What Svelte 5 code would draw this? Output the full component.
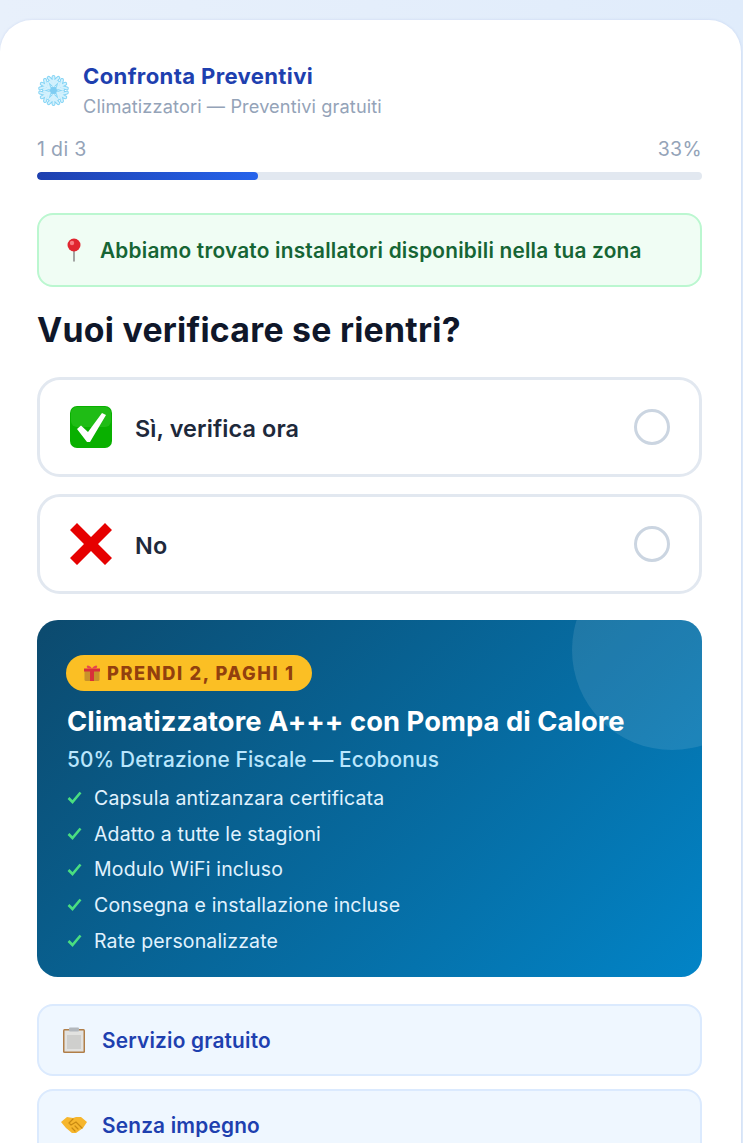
<script lang="ts">
    const perks: string[] = [
        'Capsula antizanzara certificata',
        'Adatto a tutte le stagioni',
        'Modulo WiFi incluso',
        'Consegna e installazione incluse',
        'Rate personalizzate'
    ];
    const arm = 'M0-14V14M-5-13 0-8 5-13M-4-9 0-5 4-9M-5 13 0 8 5 13M-4 9 0 5 4 9';
</script>

<div class="page">
    <main class="card">
        <header class="brand">
            <svg class="snow" viewBox="-17 -17 34 34" width="33" height="33">
                {#each [0, 60, 120] as r}
                    <path d={arm} transform="rotate({r})" fill="none" stroke="#84d4f5" stroke-width="4" stroke-linecap="round" stroke-linejoin="round"/>
                {/each}
                {#each [0, 60, 120] as r}
                    <path d={arm} transform="rotate({r})" fill="none" stroke="#d3f1fd" stroke-width="2" stroke-linecap="round" stroke-linejoin="round"/>
                {/each}
                <circle r="3.6" fill="#7fcdf2"/>
            </svg>
            <div>
                <div class="title">Confronta Preventivi</div>
                <div class="sub">Climatizzatori — Preventivi gratuiti</div>
            </div>
        </header>

        <div class="progress-labels"><span>1 di 3</span><span>33%</span></div>
        <div class="track"><div class="fill" style="width: 33.3%"></div></div>

        <div class="alert">
            <svg viewBox="0 0 16 24" width="16" height="24">
                <path d="M8 10V23" stroke="#8f8f8f" stroke-width="1.600" stroke-linecap="round"/>
                <circle cx="8" cy="7" r="6.500" fill="#e0262f"/>
                <circle cx="6" cy="5" r="2.200" fill="#f77b80"/>
            </svg>
            <span>Abbiamo trovato installatori disponibili nella tua zona</span>
        </div>

        <h1>Vuoi verificare se rientri?</h1>

        <div class="option">
            <svg viewBox="0 0 42 42" width="42" height="42">
                <rect width="42" height="42" rx="7" fill="#09b000"/>
                <rect x="1" y="1" width="40" height="20" rx="6" fill="#3ccb2e" opacity=".45"/>
                <path d="M7 23 11 19.500 18 26 32 7 36 9 20 36 17 36Z" fill="#fff"/>
            </svg>
            <span class="option-label">Sì, verifica ora</span>
            <span class="radio"></span>
        </div>
        <div class="option">
            <svg viewBox="0 0 42 42" width="42" height="42">
                <path d="M0 7 7 0 21 14 35 0 42 7 28 21 42 35 35 42 21 28 7 42 0 35 14 21Z" fill="#e60000"/>
            </svg>
            <span class="option-label">No</span>
            <span class="radio"></span>
        </div>

        <section class="promo">
            <div class="circle"></div>
            <div class="badge">
                <svg viewBox="0 0 18 18" width="18" height="18">
                    <rect x="1.500" y="5" width="15" height="12" rx="1.500" fill="#c8922a"/>
                    <rect x="7" y="5" width="4" height="12" fill="#d8303a"/>
                    <rect x="1" y="4.500" width="16" height="3" fill="#d8303a"/>
                    <path d="M9 4.500C6 .5 3 1 4 3.500 4.500 4.500 7 4.500 9 4.500 11 4.500 13.500 4.500 14 3.500 15 1 12 .5 9 4.500Z" fill="#e84550"/>
                </svg>
                PRENDI 2, PAGHI 1
            </div>
            <h2>Climatizzatore A+++ con Pompa di Calore</h2>
            <div class="promo-sub">50% Detrazione Fiscale — Ecobonus</div>
            <ul>
                {#each perks as perk}
                    <li>
                        <svg class="tick" viewBox="0 0 15 13" width="15" height="13">
                            <path d="M1.500 7 5.500 11 13.500 1.500" fill="none" stroke="#4ade80" stroke-width="2.600"/>
                        </svg>
                        {perk}
                    </li>
                {/each}
            </ul>
        </section>

        <div class="info">
            <span class="info-icon">
                <svg viewBox="0 0 22 26" width="22" height="26">
                    <rect x="0" y="2" width="22" height="24" rx="1.500" fill="#b07e48"/>
                    <rect x="1.500" y="3.500" width="19" height="21" fill="#e2e2e0"/>
                    <rect x="4" y="8" width="14" height="14" fill="#cfcfcd"/>
                    <rect x="6" y="0.500" width="10" height="4" rx="1" fill="#b3b8bd"/>
                </svg>
            </span>
            <span>Servizio gratuito</span>
        </div>
        <div class="info">
            <span class="info-icon">
                <svg viewBox="0 0 26 18" width="26" height="18">
                    <path d="M0 6 6 1 12 2 15 1 20 1 26 6 22 12 15 17 11 17 5 12Z" fill="#f6b62d"/>
                    <path d="M12 3 8 7 10 9 15 6 21 12M11 12 14 15M14 10 17 13" fill="none" stroke="#c98a12" stroke-width="1.200" stroke-linecap="round"/>
                </svg>
            </span>
            <span>Senza impegno</span>
        </div>
    </main>
</div>

<style>
    :global(body) {
        margin: 0;
        background: #fff;
    }

    .page {
        height: 1143px;
        overflow: hidden;
        padding-top: 20px;
        box-sizing: border-box;
        background: linear-gradient(90deg, #e8f0fb, #e0ecfb);
        font-family: Inter, "Liberation Sans", sans-serif;
    }

    .card {
        width: 741px;
        box-sizing: border-box;
        min-height: 1200px;
        padding: 40px 39px 0 37px;
        background: #fff;
        border-radius: 32px 32px 0 0;
        box-shadow: 0 0 3px rgba(30, 64, 175, 0.12);
    }

    .brand {
        display: flex;
        align-items: center;
        gap: 13px;
    }

    .title {
        font-size: 22.1px;
        font-weight: 700;
        line-height: 33px;
        letter-spacing: 0.35px;
        color: #1e40af;
    }

    .sub {
        font-size: 18.2px;
        line-height: 27px;
        letter-spacing: 0.11px;
        color: #94a3b8;
    }

    .progress-labels {
        display: flex;
        justify-content: space-between;
        margin-top: 16px;
        font-size: 19.5px;
        line-height: 26px;
        letter-spacing: 0.35px;
        color: #94a3b8;
    }

    .track {
        height: 8px;
        margin-top: 10px;
        background: #e2e8f0;
        border-radius: 5px;
        overflow: hidden;
    }

    .fill {
        height: 100%;
        background: linear-gradient(90deg, #1e40af, #2563eb);
        border-radius: 5px;
    }

    .alert {
        display: flex;
        align-items: center;
        gap: 18px;
        height: 74px;
        box-sizing: border-box;
        margin-top: 33px;
        padding: 0 0 0 27px;
        background: #f0fdf4;
        border: 2px solid #bbf7d0;
        border-radius: 16px;
        font-size: 20.8px;
        font-weight: 600;
        letter-spacing: 0.22px;
        color: #166534;
    }

    h1 {
        margin: 20px 0 24px;
        font-size: 33.8px;
        line-height: 46px;
        font-weight: 700;
        letter-spacing: 0.26px;
        color: #0f172a;
    }

    .option {
        display: flex;
        align-items: center;
        height: 100px;
        box-sizing: border-box;
        margin-bottom: 17px;
        padding: 0 30px;
        background: #fff;
        border: 3px solid #e2e8f0;
        border-radius: 23px;
    }

    .option-label {
        flex: 1;
        margin-left: 23px;
        padding-top: 2px;
        font-size: 23.4px;
        font-weight: 600;
        letter-spacing: 0.12px;
        color: #1e293b;
    }

    .radio {
        width: 36px;
        height: 36px;
        box-sizing: border-box;
        margin-right: -1px;
        border: 3px solid #cbd5e1;
        border-radius: 50%;
    }

    .promo {
        position: relative;
        overflow: hidden;
        height: 357px;
        box-sizing: border-box;
        margin-top: 26px;
        padding: 35px 30px 0;
        border-radius: 21px;
        background: linear-gradient(135deg, #0c4a6e, #0284c7);
    }

    .circle {
        position: absolute;
        top: -70px;
        right: -70px;
        width: 200px;
        height: 200px;
        border-radius: 50%;
        background: rgba(255, 255, 255, 0.1);
    }

    .badge {
        display: inline-flex;
        align-items: center;
        gap: 6px;
        height: 36px;
        margin-left: -1px;
        padding: 0 17px;
        border-radius: 18px;
        background: #fbbf24;
        color: #92400e;
        font-size: 18.2px;
        font-weight: 800;
        letter-spacing: 1.6px;
    }

    h2 {
        position: relative;
        margin: 11px 0 0;
        font-size: 27.3px;
        line-height: 40px;
        font-weight: 700;
        letter-spacing: 0.08px;
        color: #fff;
    }

    .promo-sub {
        margin-top: 3px;
        font-size: 20.8px;
        line-height: 30px;
        font-weight: 500;
        letter-spacing: 0.15px;
        color: #bae6fd;
    }

    ul {
        list-style: none;
        margin: 5px 0 0;
        padding: 0;
    }

    li {
        display: flex;
        align-items: center;
        height: 35.7px;
        font-size: 19.5px;
        letter-spacing: 0.16px;
        color: #e0f2fe;
    }

    .tick {
        margin-right: 12px;
    }

    .info {
        display: flex;
        align-items: center;
        gap: 15px;
        height: 72px;
        box-sizing: border-box;
        margin-top: 27px;
        margin-bottom: -14px;
        padding: 0 22px;
        background: #eff7ff;
        border: 2px solid #dbeafe;
        border-radius: 16px;
        font-size: 20.8px;
        font-weight: 600;
        letter-spacing: 0.2px;
        color: #1e40af;
    }

    .info-icon {
        display: flex;
        justify-content: center;
        width: 26px;
    }
</style>
